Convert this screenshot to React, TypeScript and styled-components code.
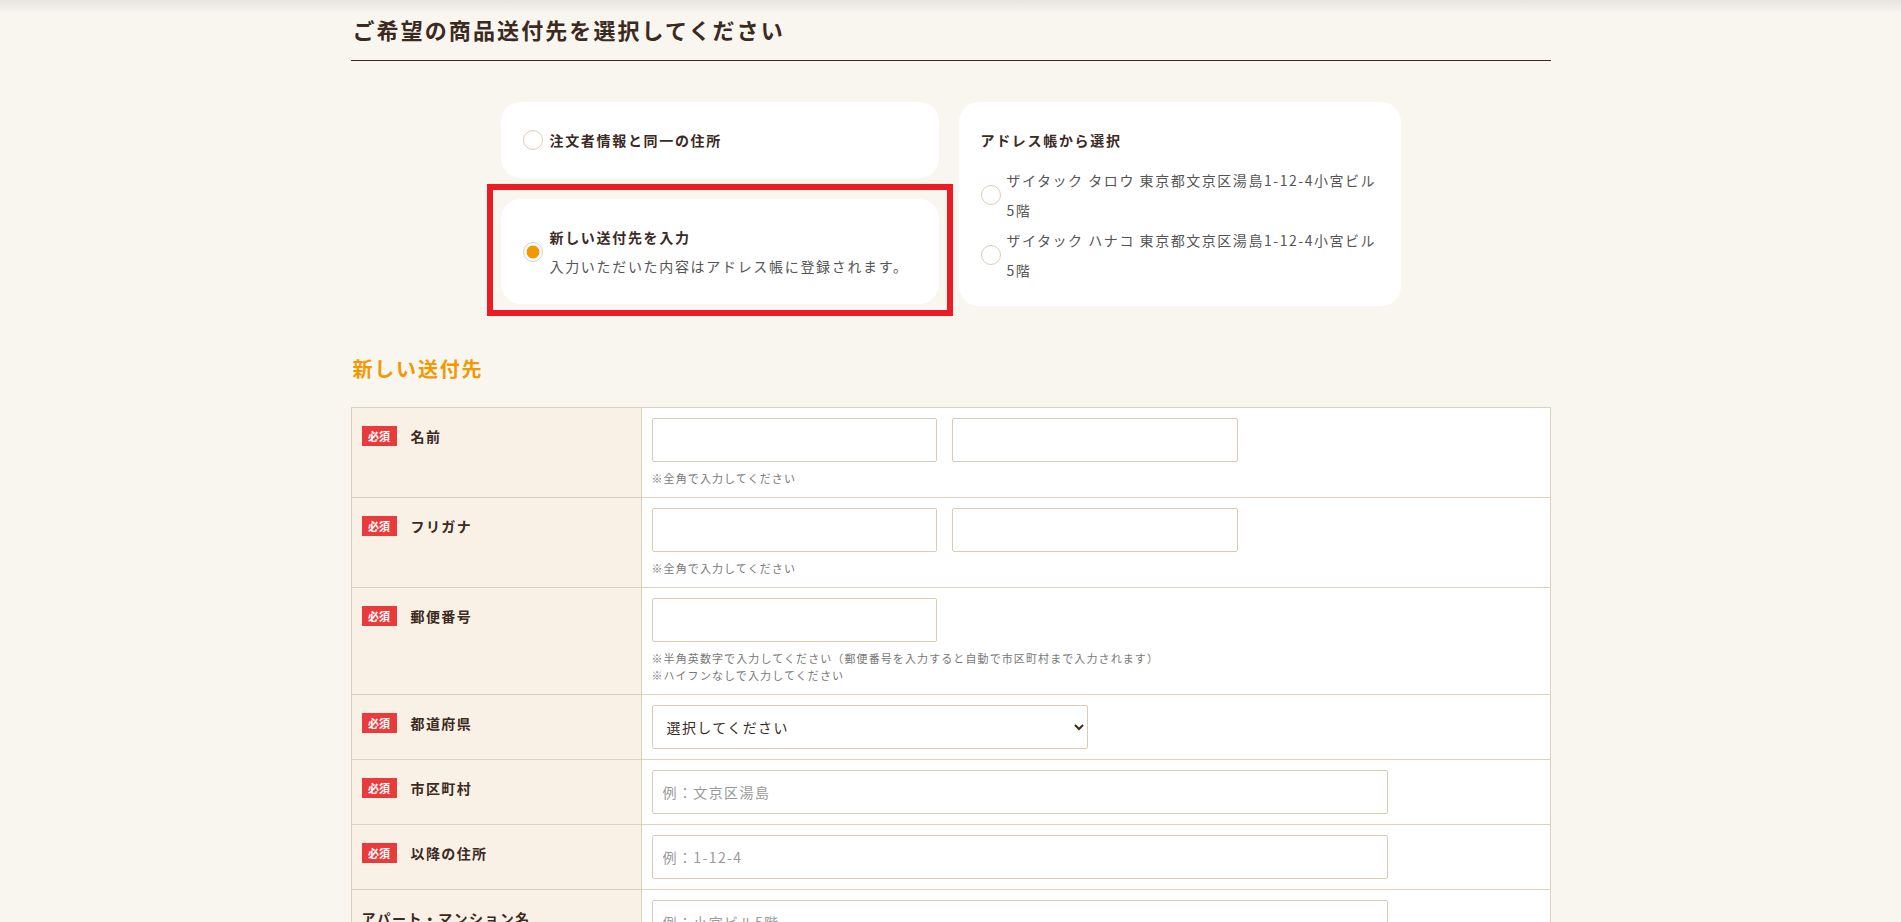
import styled, { createGlobalStyle } from 'styled-components';

const GlobalStyle = createGlobalStyle`
  body {
    margin: 0;
    background: #f9f6f0;
    color: #3b2a1f;
    font-family: "Noto Sans CJK JP", "Noto Sans", sans-serif;
  }
`;

type Field = {
  label: string;
  required?: boolean;
  kind: 'double' | 'single' | 'select';
  width?: number;
  placeholder?: string;
  notes?: string[];
};

const fields: Field[] = [
  { label: '名前', required: true, kind: 'double', notes: ['※全角で入力してください'] },
  { label: 'フリガナ', required: true, kind: 'double', notes: ['※全角で入力してください'] },
  {
    label: '郵便番号',
    required: true,
    kind: 'single',
    width: 285,
    notes: [
      '※半角英数字で入力してください（郵便番号を入力すると自動で市区町村まで入力されます）',
      '※ハイフンなしで入力してください',
    ],
  },
  { label: '都道府県', required: true, kind: 'select' },
  { label: '市区町村', required: true, kind: 'single', width: 736, placeholder: '例：文京区湯島' },
  { label: '以降の住所', required: true, kind: 'single', width: 736, placeholder: '例：1-12-4' },
  { label: 'アパート・マンション名', kind: 'single', width: 736, placeholder: '例：小宮ビル5階' },
  { label: '電話番号', required: true, kind: 'single', width: 285, placeholder: '例：0312345678' },
];

const addresses = [
  ['ザイタック タロウ 東京都文京区湯島1-12-4小宮ビル', '5階'],
  ['ザイタック ハナコ 東京都文京区湯島1-12-4小宮ビル', '5階'],
];

const App = () => {
  return (
    <Page>
      <GlobalStyle />
      <Container>
        <PageTitle>ご希望の商品送付先を選択してください</PageTitle>

        <Choices>
          <LeftStack>
            <Card $pad='26px 22px'>
              <OptionRow>
                <Radio name='dest' />
                <OptionTitle>注文者情報と同一の住所</OptionTitle>
              </OptionRow>
            </Card>
            <Highlight>
              <Card $pad='26px 22px 25px'>
                <OptionRow>
                  <Radio name='dest' defaultChecked />
                  <div>
                    <OptionTitle>新しい送付先を入力</OptionTitle>
                    <OptionNote>入力いただいた内容はアドレス帳に登録されます。</OptionNote>
                  </div>
                </OptionRow>
              </Card>
            </Highlight>
          </LeftStack>

          <Card $pad='26px 12px 21px 22px'>
            <OptionTitle>アドレス帳から選択</OptionTitle>
            <AddressList>
              {addresses.map(([line, rest]) => (
                <AddressRow key={line}>
                  <Radio name='dest' />
                  <AddressText>
                    {line}
                    <br />
                    {rest}
                  </AddressText>
                </AddressRow>
              ))}
            </AddressList>
          </Card>
        </Choices>

        <SectionTitle>新しい送付先</SectionTitle>

        <FormTable>
          <tbody>
            {fields.map(field => (
              <tr key={field.label}>
                <LabelCell>
                  <LabelWrap>
                    {field.required && <Badge>必須</Badge>}
                    {field.label}
                  </LabelWrap>
                </LabelCell>
                <ValueCell>
                  {field.kind === 'double' && (
                    <InputRow>
                      <TextInput $w={285} />
                      <TextInput $w={286} />
                    </InputRow>
                  )}
                  {field.kind === 'single' && <TextInput $w={field.width ?? 285} placeholder={field.placeholder} />}
                  {field.kind === 'select' && (
                    <Select defaultValue=''>
                      <option value=''>選択してください</option>
                      <option value='tokyo'>東京都</option>
                      <option value='osaka'>大阪府</option>
                    </Select>
                  )}
                  {field.notes && (
                    <Notes>
                      {field.notes.map(n => (
                        <p key={n}>{n}</p>
                      ))}
                    </Notes>
                  )}
                </ValueCell>
              </tr>
            ))}
          </tbody>
        </FormTable>
      </Container>
    </Page>
  );
};

const Page = styled.div`
  position: relative;
  min-height: 100vh;

  &::before {
    content: '';
    position: absolute;
    top: 0;
    left: 0;
    right: 0;
    height: 14px;
    background: linear-gradient(rgba(0, 0, 0, 0.07), rgba(0, 0, 0, 0));
    pointer-events: none;
  }
`;

const Container = styled.div`
  width: 1200px;
  margin: 0 auto;
  padding-bottom: 80px;
`;

const PageTitle = styled.h1`
  margin: 0;
  padding: 13px 0 14px 2px;
  font-size: 22px;
  line-height: 33px;
  font-weight: 700;
  letter-spacing: 0.095em;
  border-bottom: 1px solid #3b2a1f;
`;

const Choices = styled.div`
  width: 900px;
  margin: 41px auto 0;
  display: grid;
  grid-template-columns: 438px 442px;
  gap: 20px;
`;

const LeftStack = styled.div`
  display: flex;
  flex-direction: column;
  gap: 21px;
`;

const Card = styled.div<{ $pad: string }>`
  background: #ffffff;
  border-radius: 20px;
  padding: ${p => p.$pad};
`;

const Highlight = styled.div`
  position: relative;

  &::after {
    content: '';
    position: absolute;
    top: -15px;
    left: -14px;
    right: -14px;
    bottom: -12px;
    border: 6px solid #ec1c24;
    pointer-events: none;
  }
`;

const OptionRow = styled.label`
  display: flex;
  align-items: center;
  gap: 7px;
`;

const Radio = styled.input.attrs({ type: 'radio' })`
  appearance: none;
  margin: 0;
  width: 20px;
  height: 20px;
  flex-shrink: 0;
  border-radius: 50%;
  border: 1.5px solid #decdb6;
  background: #ffffff;

  &:checked {
    background: radial-gradient(circle, #f39800 0 6px, #ffffff 6.8px);
  }
`;

const OptionTitle = styled.div`
  font-size: 14px;
  line-height: 24px;
  font-weight: 700;
  letter-spacing: 0.12em;
  color: #3b2a1f;
`;

const OptionNote = styled.div`
  margin-top: 4px;
  font-size: 14px;
  line-height: 26px;
  letter-spacing: 0.12em;
  color: #555555;
`;

const AddressList = styled.div`
  margin-top: 13px;
`;

const AddressRow = styled.label`
  display: flex;
  align-items: center;
  gap: 6px;
`;

const AddressText = styled.div`
  font-size: 14px;
  line-height: 30px;
  letter-spacing: 0.11em;
  color: #555555;
`;

const SectionTitle = styled.h2`
  margin: 48px 0 23px;
  padding-left: 2px;
  font-size: 20px;
  line-height: 30px;
  font-weight: 700;
  letter-spacing: 0.09em;
  color: #f39800;
`;

const FormTable = styled.table`
  width: 100%;
  border-collapse: collapse;
`;

const LabelCell = styled.th`
  width: 269px;
  padding: 18px 10px;
  vertical-align: top;
  text-align: left;
  background: #f9f1e6;
  border: 1px solid #ddd0bf;
`;

const LabelWrap = styled.div`
  display: flex;
  align-items: center;
  gap: 14px;
  font-size: 14px;
  line-height: 20px;
  font-weight: 700;
  letter-spacing: 0.1em;
  color: #3b2a1f;
`;

const Badge = styled.span`
  width: 35px;
  height: 20px;
  display: flex;
  align-items: center;
  justify-content: center;
  background: #e93b3b;
  color: #ffffff;
  font-size: 11px;
  font-weight: 700;
  letter-spacing: 0;
`;

const ValueCell = styled.td`
  padding: 10px;
  vertical-align: top;
  background: #ffffff;
  border: 1px solid #ddd0bf;
`;

const InputRow = styled.div`
  display: flex;
  gap: 15px;
`;

const TextInput = styled.input<{ $w: number }>`
  box-sizing: border-box;
  display: block;
  width: ${p => p.$w}px;
  height: 44px;
  padding: 0 10px;
  border: 1px solid #dccbb4;
  border-radius: 2px;
  background: #ffffff;
  font-family: inherit;
  font-size: 14px;
  letter-spacing: 0.1em;
  color: #3b2a1f;

  &::placeholder {
    color: #9a9a9a;
  }
`;

const Select = styled.select`
  box-sizing: border-box;
  display: block;
  width: 436px;
  height: 44px;
  padding: 0 10px;
  border: 1px solid #dccbb4;
  border-radius: 2px;
  background: #ffffff;
  font-family: inherit;
  font-size: 14px;
  letter-spacing: 0.1em;
  color: #3b2a1f;
`;

const Notes = styled.div`
  margin-top: 8px;

  p {
    margin: 0;
    font-size: 11px;
    line-height: 17px;
    letter-spacing: 0.1em;
    color: #777777;
  }
`;

export default App;
